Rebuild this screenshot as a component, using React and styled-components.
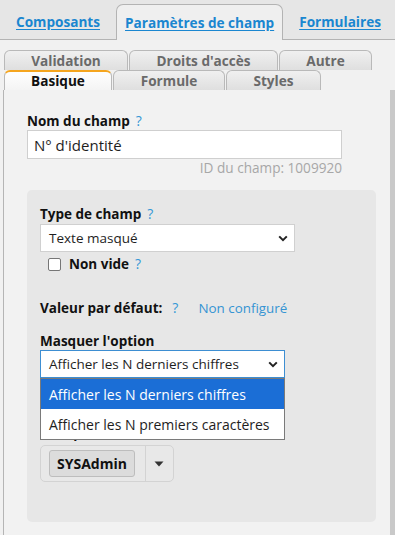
import React from 'react';
import styled, { createGlobalStyle, css } from 'styled-components';

const Global = createGlobalStyle`
  html, body { margin: 0; padding: 0; background: #f1f1f1; }
  body { font-family: "Open Sans", "Noto Sans", sans-serif; overflow: hidden; }
`;

const Page = styled.div`
  width: 395px;
  height: 535px;
  display: flex;
  flex-direction: column;
  background: #f1f1f1;
  overflow: hidden;
`;

const TopBar = styled.div`
  display: flex;
  align-items: flex-end;
  height: 40px;
  box-sizing: border-box;
  padding-left: 7px;
  background: #e6e6e6;
  border-bottom: 1px solid #b3b3b3;
  flex-shrink: 0;
`;

const TopTab = styled.a`
  box-sizing: border-box;
  flex-shrink: 0;
  white-space: nowrap;
  height: 36px;
  display: flex;
  align-items: center;
  padding: 0 8px;
  margin-right: 7px;
  border: 1px solid transparent;
  border-bottom: none;
  font-weight: 700;
  font-size: 13.6px;
  color: #1a86d0;
  text-decoration: underline;
  text-underline-offset: 2px;
  cursor: pointer;
  ${p => p.$active && css`
    background: #efefef;
    border-color: #b3b3b3;
    border-radius: 7px 7px 0 0;
    margin-bottom: -1px;
  `}
`;

const SubTabs = styled.div`
  display: flex;
  flex-direction: column;
  padding: 10px 0 0 4px;
  flex-shrink: 0;
`;

const SubRow = styled.div`
  display: flex;
  gap: 1px;
  height: 20px;
`;

const SubTab = styled.div`
  box-sizing: border-box;
  width: ${p => p.$w}px;
  height: 20px;
  border: 1px solid #b9b9b9;
  border-bottom: none;
  border-radius: 6px 6px 0 0;
  background: linear-gradient(#f0f0f0, #dfdfdf);
  font-weight: 700;
  font-size: 13.6px;
  line-height: 1;
  color: #6a6a6a;
  display: flex;
  align-items: center;
  justify-content: center;
  ${p => p.$active && css`
    border-top: 2px solid #f5a51e;
    background: linear-gradient(#fefefe, #f4f4f4);
    color: #111;
  `}
`;

const Body = styled.div`
  flex: 1;
  display: flex;
  min-height: 0;
`;

const Panel = styled.div`
  flex: 1;
  margin-left: 3px;
  border-left: 1px solid #b5b5b5;
  padding: 22px 0 0 23px;
  background: #f2f2f2;
`;

const ScrollStrip = styled.div`
  width: 5px;
  background: #c9c9c9;
`;

const FieldLabel = styled.div`
  font-weight: 700;
  font-size: 13.5px;
  line-height: ${p => p.$lh || 18}px;
  color: #111;
  margin-top: ${p => p.$mt || 0}px;
  display: flex;
  align-items: center;
  white-space: nowrap;
`;

const Help = styled.span`
  font-weight: 400;
  font-size: 14px;
  color: #3597d6;
  margin-left: ${p => p.$ml || 6}px;
`;

const TextInput = styled.div`
  box-sizing: border-box;
  width: 315px;
  height: 29px;
  border: 1px solid #cfcfcf;
  background: #fff;
  padding: 0 6px;
  font-size: 15px;
  color: #1e1e1e;
  display: flex;
  align-items: center;
`;

const IdNote = styled.div`
  width: 315px;
  text-align: right;
  font-size: 13.6px;
  line-height: 18px;
  color: #a7a7a7;
`;

const Inner = styled.div`
  margin-top: 13px;
  width: 349px;
  height: 332px;
  box-sizing: border-box;
  background: #e7e7e7;
  border-radius: 5px;
  padding: 15px 13px;
`;

const SelectWrap = styled.div`
  position: relative;
  width: ${p => p.$w}px;
  margin-top: ${p => p.$mt || 0}px;
`;

const SelectBox = styled.div`
  box-sizing: border-box;
  width: 100%;
  height: 28px;
  background: #fff;
  border: 1px solid ${p => (p.$focus ? '#3d8ed2' : '#d0d0d0')};
  padding: 0 6px 0 8px;
  font-size: 13.5px;
  color: #1e1e1e;
  display: flex;
  align-items: center;
  justify-content: space-between;
  white-space: nowrap;
`;

const Chevron = () => (
  <svg width="10" height="7" viewBox="0 0 10 7">
    <path d="M1.2 1.4 L5 5.2 L8.8 1.4" fill="none" stroke="#222" strokeWidth="2" />
  </svg>
);

const DropList = styled.div`
  position: absolute;
  top: 100%;
  left: 0;
  width: 100%;
  box-sizing: border-box;
  border: 1px solid #7a7a7a;
  background: #fff;
  z-index: 5;
`;

const Option = styled.div`
  height: 30px;
  padding: 0 8px;
  font-size: 14px;
  display: flex;
  align-items: center;
  white-space: nowrap;
  color: ${p => (p.$hl ? '#fff' : '#1e1e1e')};
  background: ${p => (p.$hl ? '#1b6ed6' : '#fff')};
`;

const CheckRow = styled.div`
  display: flex;
  align-items: center;
  height: 20px;
  margin: 2px 0 0 8px;
`;

const Checkbox = styled.span`
  box-sizing: border-box;
  width: 13px;
  height: 13px;
  border: 1px solid #767676;
  border-radius: 2px;
  background: #fff;
  margin-right: 8px;
`;

const LinkText = styled.span`
  font-weight: 400;
  font-size: 13.4px;
  color: #3594d3;
  margin-left: 20px;
`;

const TagBox = styled.div`
  display: inline-flex;
  align-items: stretch;
  box-sizing: border-box;
  height: 37px;
  margin-top: 3px;
  border: 1px solid #d3d3d3;
  border-radius: 5px;
  background: #e8e8e8;
`;

const Chip = styled.span`
  box-sizing: border-box;
  align-self: center;
  height: 27px;
  margin-left: 8px;
  padding: 0 7px;
  background: #dcdcdc;
  border: 1px solid #bdbdbd;
  border-radius: 3px;
  font-weight: 700;
  font-size: 14px;
  color: #111;
  display: flex;
  align-items: center;
`;

const Caret = styled.span`
  width: 27px;
  margin-left: 10px;
  border-left: 1px solid #d3d3d3;
  display: flex;
  align-items: center;
  justify-content: center;
`;

export default function App() {
  return (
    <Page>
      <Global />
      <TopBar>
        <TopTab>Composants</TopTab>
        <TopTab $active>Paramètres de champ</TopTab>
        <TopTab>Formulaires</TopTab>
      </TopBar>
      <SubTabs>
        <SubRow>
          <SubTab $w={124}>Validation</SubTab>
          <SubTab $w={149}>Droits d'accès</SubTab>
          <SubTab $w={93}>Autre</SubTab>
        </SubRow>
        <SubRow>
          <SubTab $w={108} $active>Basique</SubTab>
          <SubTab $w={112}>Formule</SubTab>
          <SubTab $w={95}>Styles</SubTab>
        </SubRow>
      </SubTabs>
      <Body>
        <Panel>
          <FieldLabel>Nom du champ<Help>?</Help></FieldLabel>
          <TextInput>N° d'identité</TextInput>
          <IdNote>ID du champ: 1009920</IdNote>
          <Inner>
            <FieldLabel>Type de champ<Help>?</Help></FieldLabel>
            <SelectWrap $w={255} $mt={1}>
              <SelectBox>
                <span>Texte masqué</span>
                <Chevron />
              </SelectBox>
            </SelectWrap>
            <CheckRow>
              <Checkbox />
              <FieldLabel>Non vide<Help>?</Help></FieldLabel>
            </CheckRow>
            <FieldLabel $mt={24} $lh={20}>
              Valeur par défaut:<Help $ml={10}>?</Help><LinkText>Non configuré</LinkText>
            </FieldLabel>
            <FieldLabel $mt={14}>Masquer l'option</FieldLabel>
            <SelectWrap $w={245}>
              <SelectBox $focus>
                <span>Afficher les N derniers chiffres</span>
                <Chevron />
              </SelectBox>
              <DropList>
                <Option $hl>Afficher les N derniers chiffres</Option>
                <Option>Afficher les N premiers caractères</Option>
              </DropList>
            </SelectWrap>
            <FieldLabel $mt={46}>Groupe</FieldLabel>
            <TagBox>
              <Chip>SYSAdmin</Chip>
              <Caret>
                <svg width="10" height="6" viewBox="0 0 10 6">
                  <path d="M0.5 0.5 H9.5 L5 5.5 Z" fill="#333" />
                </svg>
              </Caret>
            </TagBox>
          </Inner>
        </Panel>
        <ScrollStrip />
      </Body>
    </Page>
  );
}
